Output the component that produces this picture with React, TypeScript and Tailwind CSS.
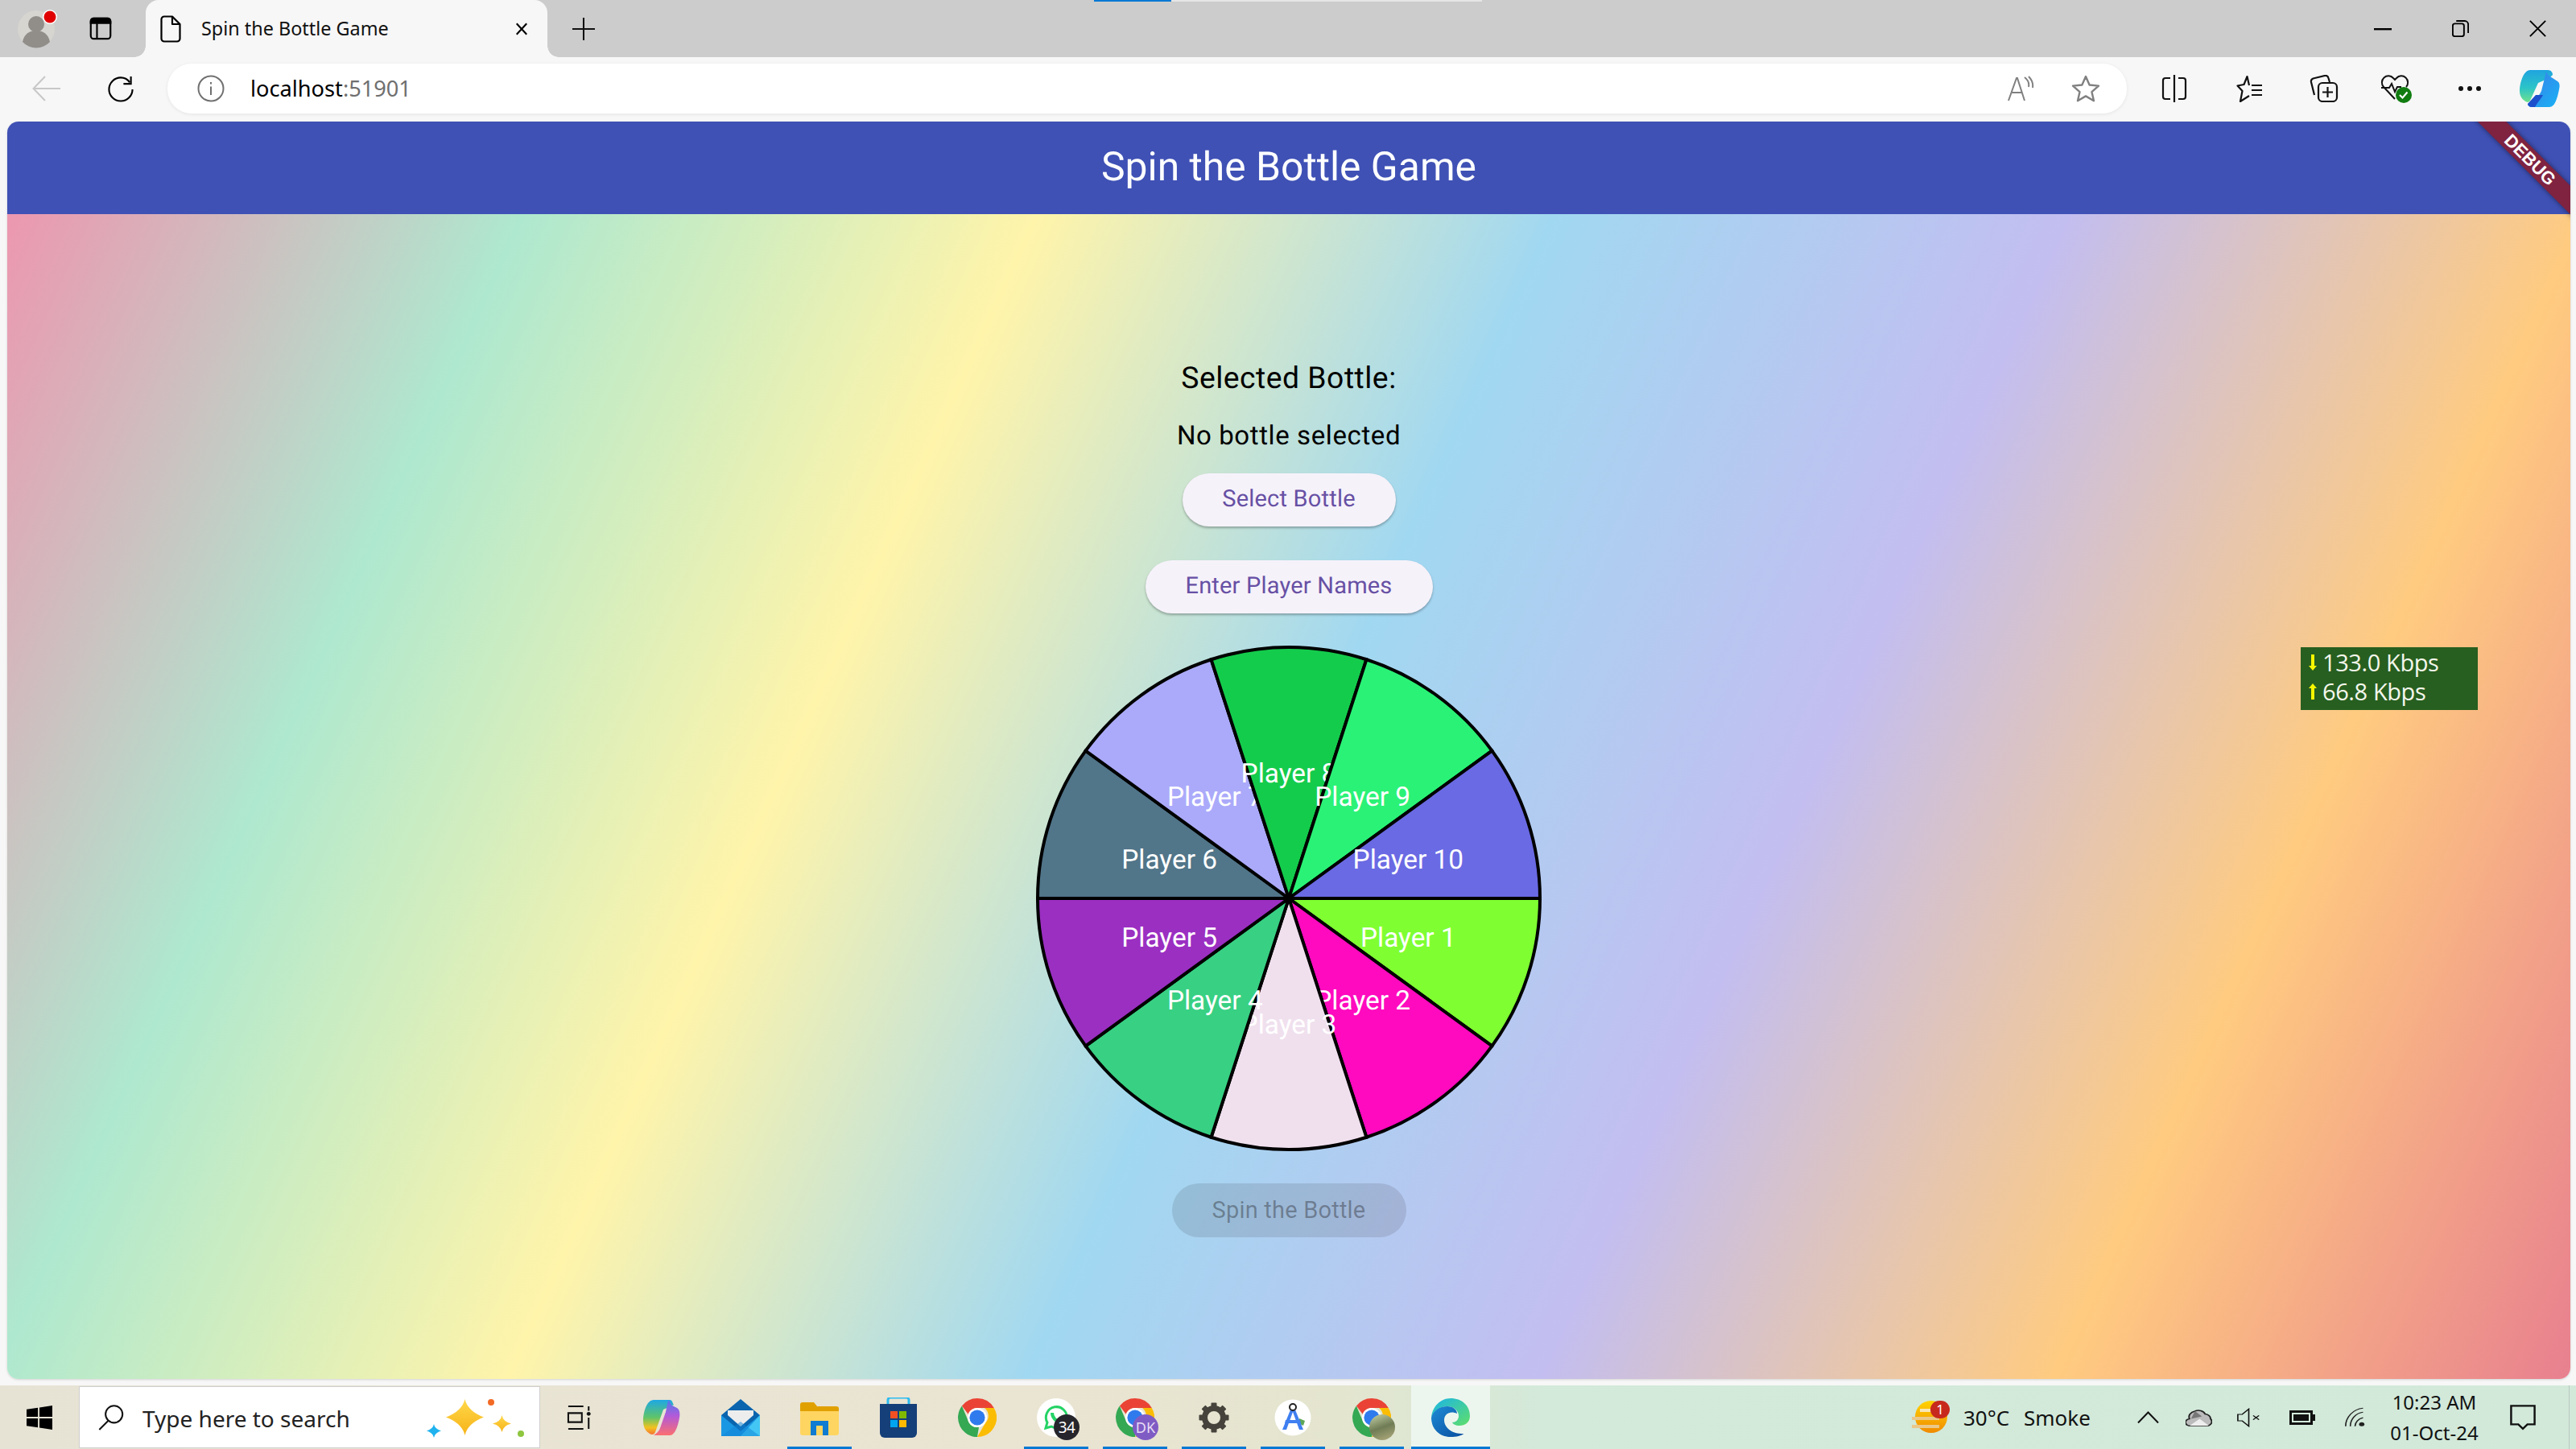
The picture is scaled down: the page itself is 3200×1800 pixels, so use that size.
import React from "react";

const SANS = "font-['Noto_Sans','Open_Sans',sans-serif]";

const players = [
  { n: "Player 1", c: "#7FFF32" },
  { n: "Player 2", c: "#FF0ABF" },
  { n: "Player 3", c: "#F0E0EE" },
  { n: "Player 4", c: "#38D083" },
  { n: "Player 5", c: "#9B2FC2" },
  { n: "Player 6", c: "#517589" },
  { n: "Player 7", c: "#ABAAFA" },
  { n: "Player 8", c: "#14CC4C" },
  { n: "Player 9", c: "#2AF276" },
  { n: "Player 10", c: "#6A6AE4" },
];

function Wheel() {
  const R = 312;
  const cx = 314;
  const cy = 314;
  const pt = (deg: number, r: number) => [
    cx + r * Math.cos((deg * Math.PI) / 180),
    cy + r * Math.sin((deg * Math.PI) / 180),
  ];
  return (
    <svg width="628" height="628" viewBox="0 0 628 628" className="block">
      {players.map((p, i) => {
        const a = i * 36;
        const [x1, y1] = pt(a, R);
        const [x2, y2] = pt(a + 36, R);
        const [tx, ty] = pt(a + 18, R / 2);
        return (
          <g key={p.n}>
            <path
              d={`M${cx} ${cy}L${x1} ${y1}A${R} ${R} 0 0 1 ${x2} ${y2}Z`}
              fill={p.c}
              stroke="#000"
              strokeWidth="4"
              strokeLinejoin="miter"
            />
            <text
              x={tx}
              y={ty + 11.5}
              textAnchor="middle"
              fill="#fff"
              fontSize="33.4"
              fontFamily="Roboto, sans-serif"
              className="[text-rendering:geometricPrecision]"
            >
              {p.n}
            </text>
          </g>
        );
      })}
    </svg>
  );
}

function Pill({ children, w }: { children: React.ReactNode; w: string }) {
  return (
    <button
      className={`${w} h-[66px] rounded-full bg-[#F6F2FA] text-[#6750A4] text-[29px] tracking-[0.2px] font-['Roboto',sans-serif] [text-rendering:geometricPrecision] shadow-[0_2px_3px_rgba(0,0,0,0.28)]`}
    >
      {children}
    </button>
  );
}

function Chrome({ size = 48 }: { size?: number }) {
  return (
    <svg width={size} height={size} viewBox="0 0 48 48">
      <path d="M24 0a24 24 0 0 1 20.8 12H24a12 12 0 0 0-11.2 7.7L4.9 9.5A24 24 0 0 1 24 0z" fill="#EA4335" />
      <path d="M44.8 12A24 24 0 0 1 24 48l10.4-18A12 12 0 0 0 33 12z" fill="#FBBC04" />
      <path d="M24 48A24 24 0 0 1 4.9 9.5L13.6 30a12 12 0 0 0 12.4 5.8z" fill="#34A853" />
      <circle cx="24" cy="24" r="12" fill="#fff" />
      <circle cx="24" cy="24" r="9.6" fill="#2F7BEE" />
    </svg>
  );
}

function Slot({ run, active, children }: { run?: boolean; active?: boolean; children: React.ReactNode }) {
  return (
    <div className={`relative w-[98px] h-full flex items-center justify-center ${active ? "bg-[#EDF6EE]" : ""}`}>
      {children}
      {run && <div className={`absolute bottom-0 h-[3px] bg-[#0078D4] ${active ? "left-0 right-0" : "left-[9px] w-[80px]"}`} />}
    </div>
  );
}

function Browser() {
  return (
    <>
      {/* tab strip */}
      <div className="relative h-[71px] bg-[#cccccc] flex shrink-0 items-center">
        <div className="absolute top-0 left-[1359px] w-[96px] h-[2px] bg-[#0078D4]" />
        <div className="absolute top-0 left-[1455px] w-[386px] h-[2px] bg-[#e6e6e6]" />
        <div className="w-[92px] h-full flex items-center justify-center">
          <svg width="56" height="50" viewBox="0 0 56 50">
            <circle cx="27" cy="25" r="23" fill="#d6d5d0" />
            <circle cx="27" cy="19" r="10" fill="#918e89" />
            <path d="M10 41c2-10 9-14 17-14s15 4 17 14a23 23 0 0 1-34 0z" fill="#918e89" />
            <circle cx="44" cy="10" r="9" fill="#fff" />
            <circle cx="44" cy="10" r="7.5" fill="#E00000" />
          </svg>
        </div>
        <div className="w-[66px] flex items-center justify-center">
          <svg width="28" height="29" viewBox="0 0 30 32" fill="none" stroke="#000" strokeWidth="2.4">
            <rect x="1.5" y="2" width="27" height="28" rx="4" />
            <path d="M1.5 8.5V6a4 4 0 0 1 4-4h19a4 4 0 0 1 4 4v2.5z" fill="#000" />
            <path d="M10 9v20" />
          </svg>
        </div>
        <div className="ml-[23px] relative w-[499px] h-full bg-[#f7f7f7] rounded-t-[16px] flex items-center">
          <div className="absolute bottom-0 -left-[14px] w-[14px] h-[14px] bg-[radial-gradient(circle_at_0_0,transparent_13.5px,#f7f7f7_14px)]" />
          <div className="absolute bottom-0 -right-[14px] w-[14px] h-[14px] bg-[radial-gradient(circle_at_100%_0,transparent_13.5px,#f7f7f7_14px)]" />
          <svg className="ml-[18px]" width="26" height="34" viewBox="0 0 26 34" fill="none" stroke="#000" strokeWidth="2.2" strokeLinejoin="round">
            <path d="M5 1.5h10l9.5 9.5v18a3.5 3.5 0 0 1-3.5 3.5H5A3.5 3.5 0 0 1 1.5 29V5A3.5 3.5 0 0 1 5 1.5z" />
            <path d="M15 1.5V11h9.5" />
          </svg>
          <span className={`ml-[25px] text-[23.4px] text-[#111] ${SANS}`}>Spin the Bottle Game</span>
          <svg className="absolute left-[458px] top-[28px]" width="18" height="16" viewBox="0 0 18 18" stroke="#000" strokeWidth="2.4">
            <path d="M2 1.5l14 15M16 1.5l-14 15" />
          </svg>
        </div>
        <div className="w-[90px] flex items-center justify-center">
          <svg width="28" height="28" viewBox="0 0 30 30" stroke="#111" strokeWidth="2.2">
            <path d="M15 0v30M0 15h30" />
          </svg>
        </div>
        <div className="ml-auto flex h-full">
          <div className="w-[96px] flex items-center justify-center">
            <svg width="22" height="4" viewBox="0 0 22 4"><rect width="22" height="2.4" y="1" fill="#000" /></svg>
          </div>
          <div className="w-[96px] flex items-center justify-center">
            <svg width="21" height="21" viewBox="0 0 24 24" fill="none" stroke="#000" strokeWidth="2.2">
              <rect x="1" y="5" width="16" height="18" rx="3" />
              <path d="M6 1.2h12a5 5 0 0 1 5 5v12" />
            </svg>
          </div>
          <div className="w-[96px] flex items-center justify-center">
            <svg width="21" height="21" viewBox="0 0 24 24" stroke="#000" strokeWidth="2.2">
              <path d="M1 1l22 22M23 1L1 23" />
            </svg>
          </div>
        </div>
      </div>

      {/* toolbar */}
      <div className="h-[80px] bg-[#f7f7f7] flex items-center shrink-0 pl-[12px] pb-[2px]">
        <div className="w-[92px] flex justify-center">
          <svg width="36" height="32" viewBox="0 0 36 32" fill="none" stroke="#c8c8c8" strokeWidth="2">
            <path d="M35 16H2M16 1L1.5 16 16 31" />
          </svg>
        </div>
        <div className="w-[92px] flex justify-center">
          <svg width="34" height="33" viewBox="0 0 34 34" fill="none" stroke="#000" strokeWidth="2.2">
            <path d="M32 17.5A15 15 0 1 1 17 2.5c4.5 0 8.5 2 11.5 6" />
            <path d="M30 1v9.5h-9.5" />
          </svg>
        </div>
        <div className="ml-[12px] w-[2434px] h-[62px] bg-white rounded-[30px] flex items-center shadow-[0_1px_4px_rgba(0,0,0,0.08)]">
          <svg className="ml-[37px]" width="34" height="34" viewBox="0 0 34 34" fill="none" stroke="#707070" strokeWidth="2">
            <circle cx="17" cy="17" r="15.5" />
            <path d="M17 14.5V25M17 9v2.5" />
          </svg>
          <span className={`ml-[32px] text-[27.2px] ${SANS} text-black`}>
            localhost<span className="text-[#6f6f6f]">:51901</span>
          </span>
          <div className="ml-auto flex items-center">
            <svg width="34" height="32" viewBox="0 0 34 32" fill="none" stroke="#808080" strokeWidth="2">
              <path d="M2 31L12 3h1l9 28M5 21h14" />
              <path d="M22 2c4 3 6 7 5 12M27 1c4 4 6 8 5 14" transform="translate(0 0)" />
            </svg>
            <svg className="ml-[46px] mr-[33px]" width="36" height="34" viewBox="0 0 36 34" fill="none" stroke="#808080" strokeWidth="2.4" strokeLinejoin="round">
              <path d="M18 2l4.6 10.5L34 13.6l-8.5 7.6L28 32.2 18 26.4 8 32.2l2.5-11L2 13.6l11.4-1.1z" />
            </svg>
          </div>
        </div>
        <div className="ml-[13px] w-[92px] flex justify-center">
          <svg width="32" height="34" viewBox="0 0 32 34" fill="none" stroke="#111" strokeWidth="2.2">
            <path d="M11 4H5a3 3 0 0 0-3 3v20a3 3 0 0 0 3 3h6M21 4h6a3 3 0 0 1 3 3v20a3 3 0 0 1-3 3h-6M16 0v34" />
          </svg>
        </div>
        <div className="w-[96px] flex justify-center">
          <svg width="34" height="34" viewBox="0 0 34 34" fill="none" stroke="#111" strokeWidth="2.2" strokeLinejoin="round">
            <path d="M16 13l-2.5-11-4 10-8 1.5 6 6.5L5 33l11-7" />
            <path d="M19 13h13M19 19h13M19 25h13" />
          </svg>
        </div>
        <div className="w-[88px] flex justify-center">
          <svg width="36" height="34" viewBox="0 0 36 34" fill="none" stroke="#111" strokeWidth="2.2">
            <path d="M6 25L2 9a4 4 0 0 1 2.5-4.5L19 1a4 4 0 0 1 4.5 3L25 9" />
            <rect x="11" y="10" width="23" height="23" rx="5" />
            <path d="M22.5 15v13M16 21.5h13" />
          </svg>
        </div>
        <div className="w-[92px] flex justify-center">
          <svg width="40" height="36" viewBox="0 0 40 36" fill="none" stroke="#111" strokeWidth="2">
            <path d="M18 31L4 16A8 8 0 0 1 16 5l2 2 2-2a8 8 0 0 1 12 11" />
            <path d="M1 17h10l3-5 4 10 3-6h5" />
            <circle cx="29" cy="26" r="10" fill="#107C10" stroke="none" />
            <path d="M24 26l3.5 3.5 6-7" stroke="#fff" strokeWidth="2.2" />
          </svg>
        </div>
        <div className="w-[90px] flex justify-center gap-[5px]">
          <div className="w-[6px] h-[6px] rounded-full bg-[#111]" />
          <div className="w-[6px] h-[6px] rounded-full bg-[#111]" />
          <div className="w-[6px] h-[6px] rounded-full bg-[#111]" />
        </div>
        <div className="w-[84px] flex justify-center">
          <svg width="52" height="46" viewBox="0 0 52 46">
            <defs>
              <linearGradient id="cp1" x1="0" y1="0" x2="0" y2="1">
                <stop offset="0" stopColor="#1FA3DF" />
                <stop offset="0.55" stopColor="#2CC4C8" />
                <stop offset="1" stopColor="#6EE08E" />
              </linearGradient>
              <linearGradient id="cp2" x1="0" y1="0" x2="1" y2="1">
                <stop offset="0" stopColor="#3B7DE8" />
                <stop offset="1" stopColor="#19B2F5" />
              </linearGradient>
            </defs>
            <path d="M14 0h22c4 0 6 3 6 6l-4 4-14 6L14 38c-2 3-5 2-7 0-3-2-6-6-6-12 0-10 5-26 13-26z" fill="url(#cp1)" />
            <path d="M34 2c2 4 3 5 8 8l6 4c3 2 3 6 2 10-2 10-5 22-12 22H16c-3 0-5-2-5-4l8-6c3-2 5-2 9-10l6-24z" fill="url(#cp2)" />
            <path d="M11 42l10-11h9c-2 4-6 8-10 15h-4c-3 0-5-2-5-4z" fill="#1C4FCB" />
          </svg>
        </div>
      </div>
    </>
  );
}

function GameApp() {
  return (
    <div className="relative w-[3184px] h-[1562px] rounded-[14px] overflow-hidden shrink-0 flex flex-col ml-[9px] shadow-[0_1px_3px_rgba(0,0,0,0.15)] [text-rendering:geometricPrecision]">
      <div className="h-[115px] shrink-0 bg-[#3F51B5] flex items-center justify-center text-white text-[49.8px] font-['Roboto',sans-serif]">
        Spin the Bottle Game
      </div>
      <div className="flex-1 pt-[4px] flex flex-col items-center justify-center bg-[linear-gradient(114.45deg,#EC97B0_0%,#AEE8CF_16.67%,#FFF4AA_33.33%,#A1D8F1_50%,#C3BEF0_66.67%,#FFCB80_83.33%,#E8808F_100%)] font-['Roboto',sans-serif] text-black">
        <div className="text-[37.3px] leading-[48px] tracking-[0.5px]">Selected Bottle:</div>
        <div className="mt-[24px] text-[33px] leading-[48px] tracking-[0.6px]">No bottle selected</div>
        <div className="mt-[22px]"><Pill w="w-[265px]">Select Bottle</Pill></div>
        <div className="mt-[42px]"><Pill w="w-[357px]">Enter Player Names</Pill></div>
        <div className="mt-[40px]"><Wheel /></div>
        <button className="mt-[40px] w-[291px] h-[67px] rounded-full bg-[rgba(29,27,32,0.12)] text-[rgba(29,27,32,0.38)] text-[29px] tracking-[0.2px]">
          Spin the Bottle
        </button>
      </div>
      <div className="absolute top-[35px] -right-[100px] w-[300px] h-[25px] rotate-45 bg-[#7F2341] shadow-[0_0_6px_rgba(0,0,0,0.5)] flex items-center justify-center text-white text-[22px] font-bold font-['Liberation_Sans',sans-serif]">
        DEBUG
      </div>
    </div>
  );
}

function Taskbar() {
  return (
    <div className={`h-[79px] mt-auto flex shrink-0 bg-[linear-gradient(90deg,#E6E3D5_0%,#EAE4D2_40%,#E4E5CF_52%,#D3E9DA_60%,#D2E9DA_100%)] ${SANS}`}>
      <div className="w-[98px] flex items-center justify-center">
        <svg width="32" height="32" viewBox="0 0 34 32" fill="#000">
          <path d="M0 5l15-2v12H0zM17 2.7L34 0v15H17zM0 17h15v12L0 27zM17 17h17v15l-17-2.7z" />
        </svg>
      </div>
      <div className="w-[573px] h-[77px] mt-[1px] bg-white border border-[#cfcfcf] flex items-center relative">
        <svg className="ml-[22px]" width="34" height="33" viewBox="0 0 36 36" fill="none" stroke="#111" strokeWidth="2.2">
          <circle cx="22" cy="14" r="11.5" />
          <path d="M14 23L2 35" />
        </svg>
        <span className="ml-[22px] pt-[3px] text-[28px] text-[#222]">Type here to search</span>
        <svg className="absolute left-[422px] top-[8px]" width="130" height="58" viewBox="0 0 130 58">
          <defs>
            <linearGradient id="spk" x1="0" y1="0" x2="0" y2="1">
              <stop offset="0" stopColor="#FFD84A" />
              <stop offset="1" stopColor="#F6B318" />
            </linearGradient>
          </defs>
          <path d="M56.5 7Q60 22 80 29.5Q60 37 56.5 52Q53 37 33 29.5Q53 22 56.5 7Z" fill="url(#spk)" />
          <path d="M102.5 27Q104 35 114 37.5Q104 40 102.5 48Q101 40 91 37.5Q101 35 102.5 27Z" fill="url(#spk)" />
          <path d="M18 38Q19 44 27 46.5Q19 49 18 55Q17 49 9 46.5Q17 44 18 38Z" fill="#1FB2EE" />
          <circle cx="89" cy="11" r="4" fill="#F36A25" />
          <circle cx="126" cy="50" r="4" fill="#8EC63F" />
        </svg>
      </div>
      <Slot>
        <svg width="32" height="30" viewBox="0 0 32 32" fill="none" stroke="#111" strokeWidth="2.2">
          <path d="M1 1h20M1 31h20M1 10h18v12H1zM28 1v6M28 16v15" />
          <circle cx="28" cy="11" r="2.6" fill="#111" stroke="none" />
        </svg>
      </Slot>
      <div className="w-[4px]" />
      <Slot>
        <svg width="48" height="44" viewBox="0 0 48 44">
          <defs>
            <linearGradient id="ms1" x1="0" y1="0" x2="0" y2="1">
              <stop offset="0" stopColor="#1EA8E4" />
              <stop offset="0.5" stopColor="#5EC46A" />
              <stop offset="0.8" stopColor="#F2C21E" />
              <stop offset="1" stopColor="#F57333" />
            </linearGradient>
            <linearGradient id="ms2" x1="0" y1="0" x2="0" y2="1">
              <stop offset="0" stopColor="#4B7BEE" />
              <stop offset="0.45" stopColor="#B25AD9" />
              <stop offset="1" stopColor="#FB6F6F" />
            </linearGradient>
          </defs>
          <path d="M14 0h20c3 0 3 3 5 6L26 12 16 40c-1 3-4 4-7 2-5-3-8-8-8-16C1 14 6 0 14 0z" fill="url(#ms1)" />
          <path d="M32 0c3 2 3 6 5 7l6 3c3 2 4 6 3 12-2 12-6 22-12 22H14c3-2 6-4 8-9l7-20z" fill="url(#ms2)" />
        </svg>
      </Slot>
      <Slot>
        <svg width="48" height="46" viewBox="0 0 48 46">
          <path d="M24 0l24 20v26H0V20z" fill="#0A64AE" />
          <path d="M8 14h32v6L24 34 8 20z" fill="#EDEDED" />
          <path d="M0 20l24 20 24-20v26H0z" fill="#1A97E3" />
          <path d="M48 20v26H24z" fill="#43C6F4" />
          <path d="M0 46l24-18 24 18z" fill="#0F84D6" opacity="0.5" />
        </svg>
      </Slot>
      <Slot run>
        <svg width="48" height="44" viewBox="0 0 48 44">
          <path d="M0 6a3 3 0 0 1 3-3h14l4 5h24a3 3 0 0 1 3 3v6H0z" fill="#E0A100" />
          <path d="M0 14h48v27a3 3 0 0 1-3 3H3a3 3 0 0 1-3-3z" fill="#FFD561" />
          <path d="M13 44V26h22v18h-7V32h-8v12z" fill="#0F7BD1" />
        </svg>
      </Slot>
      <Slot>
        <svg width="46" height="50" viewBox="0 0 46 50">
          <path d="M10 8V3a3 3 0 0 1 3-3h20a3 3 0 0 1 3 3v5" fill="none" stroke="#2DBBF0" strokeWidth="3" />
          <path d="M0 8h46v36a6 6 0 0 1-6 6H6a6 6 0 0 1-6-6z" fill="#153F78" />
          <rect x="13" y="17" width="9" height="9" fill="#F25022" />
          <rect x="24" y="17" width="9" height="9" fill="#7FBA00" />
          <rect x="13" y="28" width="9" height="9" fill="#00A4EF" />
          <rect x="24" y="28" width="9" height="9" fill="#FFB900" />
        </svg>
      </Slot>
      <Slot><Chrome /></Slot>
      <Slot run>
        <div className="relative w-[48px] h-[48px] rounded-full bg-white flex items-center justify-center">
          <svg width="32" height="32" viewBox="0 0 32 32" fill="none" stroke="#25D366" strokeWidth="3">
            <path d="M3 29l2-7a13 13 0 1 1 5 5z" />
            <path d="M11 10c0 6 5 11 11 12" strokeWidth="4" />
          </svg>
          <div className="absolute left-[21px] top-[20px] w-[32px] h-[32px] rounded-full bg-[#26252B] text-white text-[19px] leading-[32px] text-center tracking-[-0.5px]">34</div>
        </div>
      </Slot>
      <Slot run>
        <div className="relative w-[48px] h-[48px]">
          <Chrome />
          <div className="absolute left-[21px] top-[20px] w-[32px] h-[32px] rounded-full bg-[#7F5CC4] text-[#e6dcf5] text-[18px] leading-[32px] text-center">DK</div>
        </div>
      </Slot>
      <Slot run>
        <svg width="38" height="38" viewBox="0 0 38 38">
          <circle cx="19" cy="19" r="11.5" fill="none" stroke="#45433B" strokeWidth="7" />
          {[0, 45, 90, 135, 180, 225, 270, 315].map((r) => (
            <rect key={r} x="15.5" y="0.5" width="7" height="8" rx="1" fill="#45433B" transform={`rotate(${r} 19 19)`} />
          ))}
        </svg>
      </Slot>
      <Slot run>
        <svg width="46" height="46" viewBox="0 0 46 46">
          <circle cx="23" cy="23" r="22.5" fill="#fff" />
          <path d="M31 24l7 3-2 6-6-3z" fill="#5EA758" />
          <path d="M23 6L10 38h5l8-22 8 22h5z" fill="#3F7FF0" />
          <path d="M14 26h18l1 4H13z" fill="#3F7FF0" />
          <circle cx="23" cy="10" r="4" fill="#fff" stroke="#222" strokeWidth="2" />
        </svg>
      </Slot>
      <Slot run>
        <div className="relative w-[48px] h-[48px]">
          <Chrome />
          <div className="absolute left-[21px] top-[20px] w-[32px] h-[32px] rounded-full bg-[linear-gradient(160deg,#c9d3a8,#6f7c55_50%,#b4ad7f)]" />
        </div>
      </Slot>
      <Slot run active>
        <svg width="48" height="48" viewBox="0 0 48 48">
          <defs>
            <linearGradient id="ed1" x1="0" y1="0" x2="1" y2="1">
              <stop offset="0" stopColor="#1AB4E8" />
              <stop offset="1" stopColor="#5FDF6A" />
            </linearGradient>
            <linearGradient id="ed2" x1="0" y1="0" x2="1" y2="1">
              <stop offset="0" stopColor="#1D8BD6" />
              <stop offset="1" stopColor="#0A4E9E" />
            </linearGradient>
          </defs>
          <path d="M24 0c14 0 24 9 24 22 0 8-6 12-13 12-5 0-8-2-9-4 4 0 8-3 8-8 0-7-6-12-14-12C11 10 3 16 0 24 1 11 11 0 24 0z" fill="url(#ed1)" />
          <path d="M0 24c2-8 10-14 20-14 7 0 12 4 12 9-8-4-16 0-16 8 0 9 9 17 22 17 2 0 3 0 4-1-5 4-11 5-18 5C10 48 0 38 0 24z" fill="url(#ed2)" />
        </svg>
      </Slot>
      <div className="ml-auto flex items-center h-full">
        <div className="w-[64px] h-full flex items-center">
          <div className="relative w-[47px] h-[42px]">
            <div className="absolute left-[4px] top-0 w-[40px] h-[40px] rounded-full bg-[linear-gradient(180deg,#FFD400,#F08A00)]" />
            <div className="absolute left-[0px] top-[20px] w-[34px] h-[4px] bg-[#E9C88A]" />
            <div className="absolute left-[0px] top-[30px] w-[34px] h-[4px] bg-[#E9C88A]" />
            <div className="absolute left-[10px] top-[10px] w-[18px] h-[4px] bg-[#F7E6B5]" />
            <div className="absolute left-[23px] top-[0px] w-[24px] h-[22px] rounded-full bg-[#C72A1C] text-white text-[17px] leading-[22px] text-center">1</div>
          </div>
        </div>
        <span className="text-[26px] pt-[2px] text-[#111] w-[75px]">30°C</span>
        <span className="text-[26px] pt-[2px] text-[#111] w-[112px]">Smoke</span>
        <div className="w-[84px] flex justify-center">
          <svg width="27" height="15" viewBox="0 0 27 15" fill="none" stroke="#111" strokeWidth="2"><path d="M1 14.5L13.5 1.5 26 14.5" /></svg>
        </div>
        <div className="w-[42px] flex justify-center">
          <svg width="33" height="22" viewBox="0 0 34 30" preserveAspectRatio="none">
            <path d="M7 29a6 6 0 0 1-2-12 10 10 0 0 1 7-13 9 9 0 0 1 13 5 8 8 0 0 1 7 8 8 8 0 0 1-3 12z" fill="#bbb" stroke="#222" strokeWidth="2" />
            <path d="M5 29L18 17l12 12z" fill="#eee" />
            <path d="M12 4l9 9-14 4z" fill="#777" />
          </svg>
        </div>
        <div className="w-[82px] flex justify-center">
          <svg width="29" height="24" viewBox="0 0 32 36" preserveAspectRatio="none" fill="none" stroke="#111" strokeWidth="1.8">
            <path d="M1 12v12h6l9 10V2L7 12z" />
            <path d="M22 14l8 8M30 14l-8 8" />
          </svg>
        </div>
        <div className="w-[52px] flex justify-center">
          <svg width="32" height="18" viewBox="0 0 32 18">
            <rect x="1.5" y="1.5" width="26" height="15" fill="none" stroke="#111" strokeWidth="3" />
            <rect x="5" y="5" width="19" height="8" fill="#111" />
            <rect x="29" y="5" width="3" height="8" fill="#111" />
          </svg>
        </div>
        <div className="w-[78px] flex justify-center">
          <svg width="25" height="25" viewBox="0 0 30 40" preserveAspectRatio="none" fill="none" stroke="#222" strokeWidth="2">
            <path d="M1 38C1 20 12 4 27 2M8 38C8 24 16 12 27 10M15 38c0-8 5-15 12-17" />
            <circle cx="25" cy="34" r="4" fill="#222" stroke="none" />
          </svg>
        </div>
        <div className="w-[120px] h-full flex flex-col items-center justify-center text-[24px] leading-[38px] text-[#111]">
          <span>10:23 AM</span>
          <span>01-Oct-24</span>
        </div>
        <div className="w-[100px] flex justify-center">
          <svg width="32" height="32" viewBox="0 0 34 36" preserveAspectRatio="none" fill="none" stroke="#111" strokeWidth="2.6">
            <path d="M1.5 1.5h31v26H23l-6 6-6-6H1.5z" />
          </svg>
        </div>
        <div className="w-[16px] h-full flex justify-center pr-[2px]">
          <div className="w-[1px] h-full bg-[#b9c8bd]" />
        </div>
      </div>
    </div>
  );
}

export default function App() {
  return (
    <div className="relative w-[3200px] h-[1800px] bg-[#f7f7f7] flex flex-col overflow-hidden">
      <Browser />
      <GameApp />
      <Taskbar />
      <div className="absolute left-[2858px] top-[804px] w-[220px] h-[78px] bg-[#275F20] flex flex-col justify-center pl-[10px] pb-[4px] text-[30px] leading-[36px] text-[#F4F7EC] font-['Open_Sans',sans-serif]">
        <div className="flex items-center gap-[7px]">
          <svg width="10" height="22" viewBox="0 0 10 22" fill="#F6F600"><path d="M3 1h4v14h3l-5 6-5-6h3z" /></svg>
          <span className="text-[29px] tracking-[-0.4px]">133.0 Kbps</span>
        </div>
        <div className="flex items-center gap-[7px]">
          <svg width="10" height="22" viewBox="0 0 10 22" fill="#F6F600"><path d="M3 21h4V7h3L5 1 0 7h3z" /></svg>
          <span className="text-[29px] tracking-[-0.4px]">66.8 Kbps</span>
        </div>
      </div>
    </div>
  );
}
